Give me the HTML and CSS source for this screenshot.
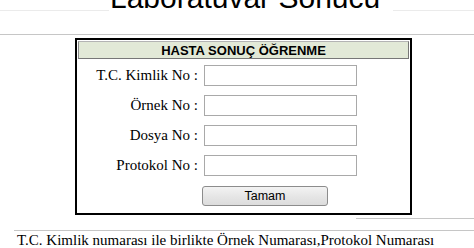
FILE: index.html
```html
<!DOCTYPE html>
<html lang="tr">
<head>
<meta charset="utf-8">
<title>Laboratuvar Sonucu</title>
<link rel="stylesheet" href="styles.css">
</head>
<body>
<div class="title-bar">
  <span class="rule rule-left"></span>
  <h1 class="title">Laboratuvar Sonucu</h1>
  <span class="rule rule-right"></span>
</div>
<hr class="sep sep-top">
<form class="form-box">
  <div class="form-header">HASTA SONUÇ ÖĞRENME</div>
  <div class="form-rows">
    <label class="field-label" for="tc">T.C. Kimlik No :</label>
    <input class="field-input" id="tc" type="text">
    <label class="field-label" for="ornek">Örnek No :</label>
    <input class="field-input" id="ornek" type="text">
    <label class="field-label" for="dosya">Dosya No :</label>
    <input class="field-input" id="dosya" type="text">
    <label class="field-label" for="protokol">Protokol No :</label>
    <input class="field-input" id="protokol" type="text">
    <div class="actions"><button class="btn" type="button">Tamam</button></div>
  </div>
</form>
<hr class="sep sep-short">
<hr class="sep sep-bottom">
<p class="note">T.C. Kimlik numarası ile birlikte Örnek Numarası,Protokol Numarası</p>
</body>
</html>
```
FILE: styles.css
```css
html, body {
  margin: 0;
  padding: 0;
  background: #fff;
  overflow: hidden;
}
body {
  font-family: "Liberation Serif", "Times New Roman", serif;
  color: #000;
}
.title-bar {
  display: flex;
  margin-top: -17px;
  height: 30px;
}
.rule {
  display: block;
  height: 28px;
  box-sizing: border-box;
  border-bottom: 1px solid #ebebeb;
}
.rule-left {
  width: 109px;
  flex: none;
}
.rule-right {
  flex: 1;
}
.title {
  margin: 0 0 0 1px;
  padding-right: 13px;
  font-family: "Liberation Sans", Arial, sans-serif;
  font-weight: normal;
  font-size: 30px;
  line-height: 30px;
  white-space: nowrap;
}
.sep {
  border: 0;
  height: 0;
  padding: 0;
  border-top: 1px solid #c6c6c6;
}
.sep-top {
  margin: 21px 0 0 0;
}
.form-box {
  margin: 3px 0 0 75px;
  width: 337px;
  box-sizing: border-box;
  border: 2px solid #000;
  padding: 1px 1px 7px 1px;
}
.form-header {
  height: 18px;
  box-sizing: border-box;
  padding-top: 1px;
  border: 1px solid;
  border-color: #b4b4b4 #777 #777 #8a8a8a;
  background: #e2e9d7;
  font-family: "Liberation Sans", Arial, sans-serif;
  font-weight: bold;
  font-size: 13px;
  line-height: 15px;
  text-align: center;
}
.form-rows {
  display: grid;
  grid-template-columns: 120px 153px;
  column-gap: 6px;
  row-gap: 9px;
  margin-top: 6px;
}
.field-label {
  font-size: 15px;
  text-align: right;
  align-self: center;
  white-space: nowrap;
}
.field-input {
  display: block;
  width: 153px;
  height: 21px;
  box-sizing: border-box;
  margin: 0;
  padding: 0 2px;
  border: 1px solid #a9a9a9;
  background: #fff;
}
.actions {
  grid-column: 2;
  margin: 1px 0 0 -2px;
}
.btn {
  display: block;
  width: 126px;
  height: 20px;
  box-sizing: border-box;
  margin: 0;
  padding: 0;
  border: 1px solid #8c8c8c;
  border-radius: 3px;
  background: linear-gradient(#f3f3f3, #e6e6e6 50%, #dcdcdc);
  font-family: "Liberation Sans", Arial, sans-serif;
  font-size: 12.5px;
  color: #000;
}
.sep-short {
  width: 118px;
  margin: 3px 0 0 auto;
}
.sep-bottom {
  margin: 11px 0 0 14px;
}
.note {
  margin: 0;
  padding-left: 17px;
  font-size: 15px;
  line-height: 18px;
  white-space: nowrap;
}
```
